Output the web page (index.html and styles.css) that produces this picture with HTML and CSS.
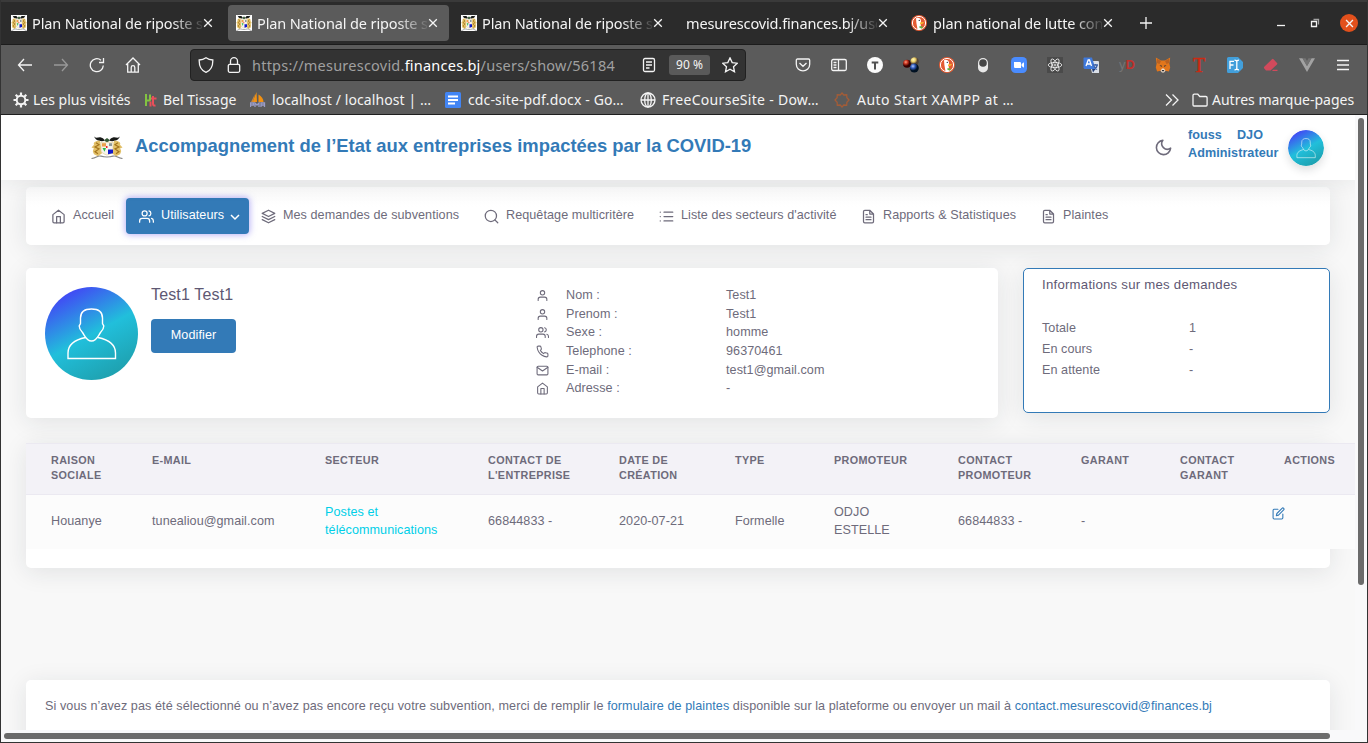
FILE: index.html
```html
<!DOCTYPE html>
<html lang="fr">
<head>
<meta charset="utf-8">
<title>Plan National de riposte</title>
<link rel="stylesheet" href="styles.css">
</head>
<body>
<svg class="sprite" width="0" height="0">
  <defs>
    <linearGradient id="av" x1="0.2" y1="0" x2="0.75" y2="1"><stop offset="0.02" stop-color="#443ef7"/><stop offset=".52" stop-color="#21bfdb"/><stop offset="1" stop-color="#1e9eab"/></linearGradient>
    <radialGradient id="red" cx=".35" cy=".3"><stop offset="0" stop-color="#ff9d80"/><stop offset=".5" stop-color="#c4301c"/><stop offset="1" stop-color="#300"/></radialGradient>
    <radialGradient id="yel" cx=".35" cy=".3"><stop offset="0" stop-color="#fff8c0"/><stop offset=".5" stop-color="#ecd06a"/><stop offset="1" stop-color="#543"/></radialGradient>
    <radialGradient id="blu" cx=".35" cy=".3"><stop offset="0" stop-color="#b0ccff"/><stop offset=".5" stop-color="#2d55b5"/><stop offset="1" stop-color="#012"/></radialGradient>
  </defs>
  <symbol id="home" viewBox="0 0 24 24"><path d="M3 9l9-7 9 7v11a2 2 0 0 1-2 2H5a2 2 0 0 1-2-2z"/><path d="M9 22V12h6v10"/></symbol>
  <symbol id="user" viewBox="0 0 24 24"><path d="M20 21v-2a4 4 0 0 0-4-4H8a4 4 0 0 0-4 4v2"/><circle cx="12" cy="7" r="4"/></symbol>
  <symbol id="users" viewBox="0 0 24 24"><path d="M17 21v-2a4 4 0 0 0-4-4H5a4 4 0 0 0-4 4v2"/><circle cx="9" cy="7" r="4"/><path d="M23 21v-2a4 4 0 0 0-3-3.870M16 3.130a4 4 0 0 1 0 7.750"/></symbol>
  <symbol id="layers" viewBox="0 0 24 24"><path d="M12 2L2 7l10 5 10-5zM2 17l10 5 10-5M2 12l10 5 10-5"/></symbol>
  <symbol id="search" viewBox="0 0 24 24"><circle cx="11" cy="11" r="9"/><path d="M22 22l-4.600-4.600"/></symbol>
  <symbol id="list" viewBox="0 0 24 24"><path d="M8 5h14M8 12h14M8 19h14M2 5h.1M2 12h.1M2 19h.1"/></symbol>
  <symbol id="file" viewBox="0 0 24 24"><path d="M14 2H6a2 2 0 0 0-2 2v16a2 2 0 0 0 2 2h12a2 2 0 0 0 2-2V8zM14 2v6h6M16 13H8M16 17H8M10 9H8"/></symbol>
  <symbol id="phone" viewBox="0 0 24 24"><path d="M22 16.920v3a2 2 0 0 1-2.180 2 19.800 19.800 0 0 1-8.630-3.070 19.500 19.500 0 0 1-6-6A19.800 19.800 0 0 1 2.120 4.180 2 2 0 0 1 4.110 2h3a2 2 0 0 1 2 1.720c.13.96.36 1.900.7 2.810a2 2 0 0 1-.45 2.110L8.090 9.910a16 16 0 0 0 6 6l1.270-1.270a2 2 0 0 1 2.110-.45c.91.34 1.850.57 2.810.7A2 2 0 0 1 22 16.920z"/></symbol>
  <symbol id="mail" viewBox="0 0 24 24"><rect x="2" y="4" width="20" height="16" rx="2"/><path d="M22 6l-10 7L2 6"/></symbol>
  <symbol id="moon" viewBox="0 0 24 24"><path d="M21 12.790A9 9 0 1 1 11.210 3 7 7 0 0 0 21 12.790z"/></symbol>
  <symbol id="edit" viewBox="0 0 24 24"><path d="M11 4H4a2 2 0 0 0-2 2v14a2 2 0 0 0 2 2h14a2 2 0 0 0 2-2v-7"/><path d="M18.500 2.500a2.120 2.120 0 0 1 3 3L12 15l-4 1 1-4z"/></symbol>
  <symbol id="close" viewBox="0 0 10 10"><path d="M1.200 1.200l7.600 7.600M8.800 1.200l-7.600 7.600"/></symbol>
  <symbol id="crest" viewBox="0 0 32 24" preserveAspectRatio="none">
    <path d="M3 0c1 3 4 1 7 1.500 2 .5 3.500 2 3.500 3.500C10 6 4 5 3 0zM29 0c-1 3-4 1-7 1.500-2 .5-3.500 2-3.500 3.500C22 6 28 5 29 0z" fill="#181a18"/>
    <path d="M13 4.500l3-2.500 3 2.500-3 2.500z" fill="#355a36"/>
    <path d="M9 5C4 5 2 7 3 9l-2.500 3L3 13c-2 2-1 4 0 6l4 2 4-3zM23 5c5 0 7 2 6 4l2.500 3-2.500 1c2 2 1 4 0 6l-4 2-4-3z" fill="#e2c068"/>
    <path d="M5 7l3 2-4 2.500 4 2-4 3 3 2M27 7l-3 2 4 2.500-4 2 4 3-3 2" fill="none" stroke="#a3741d" stroke-width="1.200"/>
    <path d="M10 6.500h12V15c0 3-4 4-6 5-2-1-6-2-6-5z" fill="#f6f4ee" stroke="#e0c681" stroke-width=".6"/>
    <path d="M11 7.500h4v3.500h-4z" fill="#eda04a"/><path d="M18 7.500h3v3h-3z" fill="#8f9a9a"/><path d="M11.500 12.500h3.500l-1.500 4z" fill="#29b94c"/><path d="M17 14h5v4l-5 1z" fill="#1119c9"/><path d="M15 10.500h1.500v2H15z" fill="#e22"/>
    <path d="M.5 23.500C5 23 7 20 10 21c3 1 9 1 12 0 3-1 5 2 9.500 2.500" fill="none" stroke="#888" stroke-width="1.200"/>
  </symbol>
  <symbol id="duck" viewBox="0 0 16 16"><circle cx="8" cy="8" r="8" fill="#e45b33"/><circle cx="8" cy="8" r="6.600" fill="#e45b33" stroke="#fff" stroke-width="1"/><path d="M5 3.300c2-1.300 5 0 5 2.700l-.3 4 .8 4c-1.500.7-3 .6-4 .3L5.400 8z" fill="#fff"/><path d="M9 7.500l4-.6-1 1.700-3 .7z" fill="#f7c231"/><path d="M8.500 11l3 .5v2l-3-.6z" fill="#5db544"/><circle cx="8.300" cy="5.400" r=".7" fill="#345"/></symbol>
  <symbol id="portrait" viewBox="0 0 93 93"><circle cx="46.500" cy="46.500" r="46.500" fill="url(#av)"/><path d="M40.500 50.500C31 52.500 23 57 23 66v5.500h47.500V66c0-9-8-13.500-17.500-15.500M35.500 31c0-6 4.500-9 11-9s11 3 11 9v5.500l1.300 2.500c0 3-1.300 4.500-3.300 6.500-2.500 3.500-4 8.500-9 8.500s-6.500-5-9-8.500c-2-2-3.300-3.500-3.300-6.500l1.300-2.500z" fill="none" stroke="#fff" stroke-width="1.400"/></symbol>
</svg>

<header class="browser">
  <div class="tabs">
    <div class="tab"><svg class="fav"><use href="#crest"/></svg><span class="tab-title">Plan National de riposte s</span><svg class="x"><use href="#close"/></svg></div>
    <div class="tab active"><svg class="fav"><use href="#crest"/></svg><span class="tab-title">Plan National de riposte s</span><svg class="x"><use href="#close"/></svg></div>
    <div class="tab"><svg class="fav"><use href="#crest"/></svg><span class="tab-title">Plan National de riposte s</span><svg class="x"><use href="#close"/></svg></div>
    <div class="tab"><span class="tab-title">mesurescovid.finances.bj/use</span><svg class="x"><use href="#close"/></svg></div>
    <div class="tab"><svg class="fav plain"><use href="#duck"/></svg><span class="tab-title">plan national de lutte con</span><svg class="x"><use href="#close"/></svg></div>
    <svg class="plus" viewBox="0 0 12 12"><path d="M6 0v12M0 6h12"/></svg>
    <svg class="win min" viewBox="0 0 16 16"><path d="M4 10.500h8"/></svg>
    <svg class="win" viewBox="0 0 16 16"><path d="M4.500 6.500h5v5h-5z"/><path class="back" d="M6.500 4.500h5v5"/></svg>
    <span class="win-close"><svg viewBox="0 0 10 10"><use href="#close"/></svg></span>
  </div>

  <div class="toolbar">
    <div class="nav-buttons">
      <svg viewBox="0 0 16 16"><path d="M15 8H1.500M7 2L1.500 8 7 14"/></svg>
      <svg class="dim" viewBox="0 0 16 16"><path d="M1 8h13.500M9 2l5.500 6L9 14"/></svg>
      <svg viewBox="0 0 16 16"><path d="M14.300 8.500A6.500 6.500 0 1 1 12 3.200M14.500 1v4.500H10"/></svg>
      <svg viewBox="0 0 16 16"><path d="M1 8l7-7 7 7M2.700 7v8.200h10.600V7M6.200 15V10.500a1.800 1.800 0 0 1 3.600 0V15"/></svg>
    </div>
    <div class="url">
      <svg viewBox="0 0 16 16"><path d="M8 .8c2 1.500 4.500 2.200 6.800 2.200C15 9 13 13.500 8 15.400 3 13.500 1 9 1.200 3 3.500 3 6 2.300 8 .8z"/></svg>
      <svg viewBox="0 0 16 16"><rect x="2.300" y="7.300" width="11.400" height="8" rx="1.500"/><path d="M4.500 7V4.200a3.500 3.500 0 0 1 7 0V7"/></svg>
      <span class="address">https://mesurescovid.<b>finances.bj</b>/users/show/56184</span>
      <svg class="reader" viewBox="0 0 16 16"><rect x="2.500" y="1.500" width="11" height="13" rx="1.500"/><path d="M5 5h6M5 8h6M5 11h3.500"/></svg>
      <span class="zoom">90 %</span>
      <svg viewBox="0 0 16 16"><path d="M8 .9l2.200 4.700 5.100.6-3.800 3.500 1 5.100L8 12.300l-4.500 2.500 1-5.100L.7 6.200l5.100-.6z"/></svg>
    </div>
    <div class="extensions">
      <svg viewBox="0 0 16 16"><path d="M2.500 2h11c.8 0 1.200.5 1.200 1.200v4a6.700 6.700 0 0 1-13.400 0v-4C1.300 2.500 1.700 2 2.500 2zM4.500 6L8 9.300 11.500 6"/></svg>
      <svg viewBox="0 0 16 16"><rect x=".7" y="2.500" width="14.600" height="11" rx="1.500"/><path d="M7.500 2.500v11M2.500 5.500h3M2.500 8h3M2.500 10.500h3"/></svg>
      <svg class="fill" viewBox="0 0 16 16"><circle cx="8" cy="8" r="8" fill="#fbfbfb"/><path d="M4.700 4.500h6.600v2H9v6H7v-6H4.700z" fill="#505050"/></svg>
      <svg class="fill" viewBox="0 0 16 16"><circle cx="4" cy="6.700" r="4" fill="url(#red)"/><circle cx="11.600" cy="4.400" r="4.200" fill="url(#yel)"/><circle cx="11.300" cy="11" r="4.500" fill="url(#blu)"/></svg>
      <svg class="fill" viewBox="0 0 16 16"><use href="#duck"/></svg>
      <svg class="fill" viewBox="0 0 16 16"><rect x="3" y="1" width="10" height="14.500" rx="5" fill="#e8e8e8"/><circle cx="8" cy="6" r="3.800" fill="#464646"/></svg>
      <svg class="fill" viewBox="0 0 16 16"><rect width="16" height="16" rx="4.500" fill="#4a8cff"/><path d="M3 5h6a1.200 1.200 0 0 1 1 1v5H4a1.200 1.200 0 0 1-1-1zM10.600 7L13 5.300v5.400L10.600 9z" fill="#fff"/></svg>
      <svg class="react" viewBox="0 0 16 16"><rect width="16" height="16" fill="#4a4a4a" stroke="none"/><ellipse cx="8" cy="8" rx="6.800" ry="2.600"/><ellipse cx="8" cy="8" rx="6.800" ry="2.600" transform="rotate(60 8 8)"/><ellipse cx="8" cy="8" rx="6.800" ry="2.600" transform="rotate(120 8 8)"/><circle cx="8" cy="8" r="1"/></svg>
      <svg class="fill" viewBox="0 0 16 16"><path d="M6 4h9a1 1 0 0 1 1 1v11H9z" fill="#dadfe8"/><path d="M1 .5h8l3.500 11.500H1.500L.5 11V1z" fill="#3f79db"/><path d="M3 9l2.200-6h1.300l2 6M3.800 7h4" fill="none" stroke="#fff" stroke-width="1.300"/><path d="M10 8h5M12.500 7v1M14 8c0 2-2 4-3 4.500M11 9.500l3 3" fill="none" stroke="#3f63a8"/><path d="M9 12h3.500L10 15.500z" fill="#233d75"/></svg>
      <span class="yd">y<b>D</b></span>
      <svg class="fill" viewBox="0 0 16 16"><path d="M.8.5L6 3.500h4L15.200.5l-.8 6 .8 4-1.300 4-3.400-.8L9 15H7l-1.500-1.300-3.400.8-1.300-4 .8-4z" fill="#e2761b"/><path d="M5.500 13.700L7 11.500h2l1.500 2.200L9 15.500H7z" fill="#e9dccd"/><path d="M4.500 8l2.500.7-.5 1.200zM11.500 8L9 8.700l.5 1.200zM7 13h2l.3 1.300H6.700z" fill="#32343c"/><path d="M2 1.800L6 4l-1.500 3L2 6zM14 1.800L10 4l1.500 3L14 6z" fill="#b96121"/></svg>
      <span class="serif-t">T</span>
      <svg class="fill" viewBox="0 0 16 16"><path d="M1.500 0H11l5 5v6l-5 5H1.500A1.500 1.500 0 0 1 0 14.500v-13A1.500 1.500 0 0 1 1.500 0z" fill="#429fdb"/><path d="M3 12V4.300h4M3 8h3.500M7.500 3.200c1.700 0 2.300.5 2.300 1.200v7.200c0 .8-.6 1.200-2.300 1.200M12 3.200c-1.500 0-2.200.5-2.200 1.200M12 12.800c-1.500 0-2.200-.5-2.200-1.200" fill="none" stroke="#fff" stroke-width="1.300"/></svg>
      <svg class="fill" viewBox="0 0 16 16"><path d="M1.500 9.500L9 2.300a1 1 0 0 1 1.500 0L14 6a1 1 0 0 1 0 1.400L7.500 13.500H3L1.300 11.600c-.6-.7-.5-1.500.2-2.100zM10 12.700h4.500v1.300H9z" fill="#d14a5c"/></svg>
      <svg class="fill" viewBox="0 0 16 16"><path d="M0 1.300h3.500L8 9l4.500-7.700H16L8 15z" fill="#a2a2a2"/><path d="M3.500 1.300h3L8 4l1.500-2.700h3L8 9z" fill="#747474"/></svg>
      <svg viewBox="0 0 16 16"><path d="M2 3.500h12M2 8h12M2 12.500h12"/></svg>
    </div>
  </div>

  <div class="bookmarks">
    <div class="bm"><svg viewBox="0 0 16 16"><circle cx="8" cy="8" r="4.300" stroke-width="2"/><path stroke-width="2.200" d="M8 .5v3M8 12.500v3M.5 8h3M12.500 8h3M2.700 2.700l2 2M11.300 11.300l2 2M2.700 13.300l2-2M11.300 4.700l2-2"/></svg><span class="t1">Les plus visités</span></div>
    <div class="bm"><svg class="narrow" viewBox="0 0 13 16"><path d="M2 2v12M2 8.500h4.500M6 2.500v6" stroke="#83c341" stroke-width="2"/><path d="M9 4v8q0 2 2.500 1.500M7 6.500h5.500M6.500 9.500v5" stroke="#e8505b" stroke-width="2"/></svg><span class="t2">Bel Tissage</span></div>
    <div class="bm"><svg viewBox="0 0 16 16"><path d="M6.500 0L7 10H2.500zM8.500 2.500c3 1.500 5 4.500 5 7.500H8.500z" fill="#f29111" stroke="none"/><path d="M5 2L1 10h2z" fill="#c9873c" stroke="none"/><path d="M.5 15v-4h3v2H1M5 15v-4l2 2 2-2v4M11 15v-4h3.500v4M11.500 13h3" stroke="#9a9cc6"/></svg><span class="t3">localhost / localhost | …</span></div>
    <div class="bm"><svg viewBox="0 0 16 16"><rect width="16" height="16" rx="1.500" fill="#4285f4" stroke="none"/><path d="M3 4.500h10M3 8h10M3 11.500h7" stroke="#fff" stroke-width="1.800"/></svg><span class="t4">cdc-site-pdf.docx - Go…</span></div>
    <div class="bm"><svg viewBox="0 0 16 16"><circle cx="8" cy="8" r="7"/><ellipse cx="8" cy="8" rx="3.300" ry="7"/><path d="M1 8h14M8 1v14"/></svg><span class="t5">FreeCourseSite - Dow…</span></div>
    <div class="bm"><svg viewBox="0 0 16 16"><path stroke="#a35c37" stroke-width="1.300" d="M8 1l1.800 2 2.900-.2.200 2.900 2.100 2.300-2.100 2.300-.2 2.900-2.900-.2L8 15l-1.800-2-2.900.2-.2-2.900L1 8l2.100-2.300.2-2.900 2.900.2z"/></svg><span class="t6">Auto Start XAMPP at …</span></div>
    <div class="bm"><svg class="more" viewBox="0 0 16 16"><path d="M2 2.500L7.500 8 2 13.500M8.500 2.500L14 8l-5.500 5.500"/></svg></div>
    <div class="bm other"><svg viewBox="0 0 16 16"><path d="M1 13V3.500A1.300 1.300 0 0 1 2.300 2.200h3.500l2 2.300h6a1.300 1.300 0 0 1 1.300 1.300V13a1 1 0 0 1-1 1H2a1 1 0 0 1-1-1z"/></svg><span class="t7">Autres marque-pages</span></div>
  </div>
</header>

<main class="window">
  <div class="page">
    <div class="topbar">
      <svg class="logo"><use href="#crest"/></svg>
      <h1>Accompagnement de l’Etat aux entreprises impactées par la COVID-19</h1>
      <svg class="ic moon"><use href="#moon"/></svg>
      <div class="who"><span class="names"><span>fouss</span><span>DJO</span></span><span class="role">Administrateur</span></div>
      <svg class="small-avatar"><use href="#portrait"/></svg>
    </div>

    <nav class="card menu">
      <a class="item i1"><svg class="ic"><use href="#home"/></svg>Accueil</a>
      <a class="item current"><svg class="ic"><use href="#users"/></svg>Utilisateurs<svg class="chev" viewBox="0 0 10 10"><path d="M1 3l4 4 4-4"/></svg></a>
      <a class="item i3"><svg class="ic"><use href="#layers"/></svg>Mes demandes de subventions</a>
      <a class="item i4"><svg class="ic"><use href="#search"/></svg>Requêtage multicritère</a>
      <a class="item i5"><svg class="ic"><use href="#list"/></svg>Liste des secteurs d'activité</a>
      <a class="item i6"><svg class="ic"><use href="#file"/></svg>Rapports &amp; Statistiques</a>
      <a class="item i7"><svg class="ic"><use href="#file"/></svg>Plaintes</a>
    </nav>

    <section class="summary">
      <div class="card profile">
        <svg class="avatar"><use href="#portrait"/></svg>
        <div class="identity"><h2>Test1 Test1</h2><button class="edit-btn">Modifier</button></div>
        <dl class="details">
          <svg class="ic"><use href="#user"/></svg><dt>Nom :</dt><dd>Test1</dd>
          <svg class="ic"><use href="#user"/></svg><dt>Prenom :</dt><dd>Test1</dd>
          <svg class="ic"><use href="#users"/></svg><dt>Sexe :</dt><dd>homme</dd>
          <svg class="ic"><use href="#phone"/></svg><dt>Telephone :</dt><dd>96370461</dd>
          <svg class="ic"><use href="#mail"/></svg><dt>E-mail :</dt><dd>test1@gmail.com</dd>
          <svg class="ic"><use href="#home"/></svg><dt>Adresse :</dt><dd>-</dd>
        </dl>
      </div>
      <div class="card info">
        <h3>Informations sur mes demandes</h3>
        <dl><dt>Totale</dt><dd>1</dd><dt>En cours</dt><dd>-</dd><dt>En attente</dt><dd>-</dd></dl>
      </div>
    </section>

    <section class="card listing">
      <table>
        <colgroup><col class="c1"><col class="c2"><col class="c3"><col class="c4"><col class="c5"><col class="c6"><col class="c7"><col class="c8"><col class="c9"><col class="c10"><col class="c11"></colgroup>
        <thead><tr><th>Raison<br>sociale</th><th>E-mail</th><th>Secteur</th><th>Contact de<br>l'entreprise</th><th>Date de<br>création</th><th>Type</th><th>Promoteur</th><th>Contact<br>promoteur</th><th>Garant</th><th>Contact<br>garant</th><th>Actions</th></tr></thead>
        <tbody><tr><td>Houanye</td><td>tunealiou@gmail.com</td><td class="sector">Postes et<br>télécommunications</td><td>66844833 -</td><td>2020-07-21</td><td>Formelle</td><td>ODJO<br>ESTELLE</td><td>66844833 -</td><td>-</td><td></td><td class="actions"><svg class="ic"><use href="#edit"/></svg></td></tr></tbody>
      </table>
    </section>

    <footer class="card notice">Si vous n’avez pas été sélectionné ou n’avez pas encore reçu votre subvention, merci de remplir le <a>formulaire de plaintes</a> disponible sur la plateforme ou envoyer un mail à <a>contact.mesurescovid@finances.bj</a></footer>
  </div>
  <div class="vscroll"><i></i></div>
  <div class="hscroll"><i></i></div>
</main>
</body>
</html>
```
FILE: styles.css
```css
* { box-sizing: border-box; }
body { margin: 0; width: 1368px; height: 743px; overflow: hidden; font-family: "Liberation Sans", Arial, sans-serif; background: #f8f8f8; }
.sprite { position: absolute; }
svg { display: block; flex: none; }

/* Browser frame */
.browser { height: 115px; background: #5b5b5b; color: #f4f4f4; font: 14.5px/20px "Noto Sans", sans-serif; border-bottom: 1px solid #1f1f1f; border-left: 1px solid #333; border-right: 1px solid #333; white-space: nowrap; }
.browser svg { fill: none; stroke: #f4f4f4; stroke-width: 1.300; }
.browser svg.fill, .fav { stroke: none !important; }
.tabs { height: 45px; background: #2b2b2b; border-top: 2px solid #3a3a3a; border-bottom: 1px solid #1c1c1c; display: flex; align-items: center; padding-left: 2px; gap: 4px; }
.tab { width: 221px; height: 36px; border-radius: 4px; display: flex; align-items: center; padding: 0 11px 0 8px; flex: none; }
.tab.active { background: #5b5b5b; }
.fav { width: 16px; height: 16px; margin-right: 5px; background: #fff; }
.fav.plain { background: none; margin-right: 6px; }
.tab-title { flex: 1; min-width: 0; letter-spacing: -.13px; -webkit-mask-image: linear-gradient(90deg, #000 calc(100% - 30px), rgba(0,0,0,.1)); mask-image: linear-gradient(90deg, #000 calc(100% - 30px), rgba(0,0,0,.1)); }
.x { width: 10px; height: 10px; margin-left: 1px; }
.plus { width: 12px; height: 12px; margin-left: 12px; }
.win { width: 16px; height: 16px; margin-left: 14px; }
.win .back { opacity: .6; }
.win.min { margin-left: 117px; }
.win-close { width: 18px; height: 18px; margin-left: 13px; border-radius: 50%; background: #e2501c; display: grid; place-items: center; }
.win-close svg { width: 9px; height: 9px; stroke-width: 1.500; }
.toolbar { height: 40px; display: flex; align-items: center; padding: 0 16px 0 16px; }
.nav-buttons { display: flex; gap: 20px; width: 173px; }
.nav-buttons svg { width: 16px; height: 16px; }
.nav-buttons .dim { opacity: .4; }
.url { width: 556px; height: 32px; background: #333; border: 1px solid #212121; border-radius: 4px; display: flex; align-items: center; padding: 0 7px; }
.url svg { width: 16px; height: 16px; margin-right: 12px; }
.url .reader { margin-right: 12px; margin-left: auto; }
.address { color: #a0a0a0; margin-left: -2px; letter-spacing: .23px; }
.address b { color: #fff; font-weight: 400; }
.zoom { width: 41px; height: 20px; line-height: 20px; background: #5a5a5a; border-radius: 3px; text-align: center; font-size: 12px; margin-right: 12px; }
.url svg:last-child { margin-right: 0; }
.extensions { margin-left: auto; display: flex; gap: 20px; align-items: center; }
.extensions svg, .extensions span { width: 16px; height: 16px; flex: none; }
.browser .react { stroke-width: .8; }
.yd { font: 13px/16px "Liberation Sans", sans-serif; color: #757575; }
.yd b { color: #c2312c; }
.serif-t { font: 20px/16px "Liberation Serif", serif; color: #cc2a12; text-align: center; -webkit-text-stroke: .5px #cc2a12; }
.bookmarks { height: 30px; padding-left: 12px; display: grid; grid-template-columns: 131px 106px 195px 195px 194px 330px 28px 170px; align-items: center; font-size: 14px; }
.bm { display: flex; align-items: center; gap: 4px; }
.bm svg { width: 16px; height: 16px; }
.bm .narrow { width: 13px; margin-right: 2px; }
.t3, .t5 { margin-left: 2px; }
.t4, .t6 { margin-left: 3px; }
.t3 { letter-spacing: .09px; } .t4 { letter-spacing: .14px; } .t5 { letter-spacing: .29px; } .t6 { letter-spacing: .43px; }

/* Page viewport */
.window { height: 628px; border: solid #333; border-width: 0 1px 1px; display: grid; grid-template: 615px 12px / 1354px 12px; }
.page { background: #f8f8f8; overflow: hidden; display: flex; flex-direction: column; color: #6e6b7b; font-size: 12.6px; line-height: 18.300px; letter-spacing: .065px; }
.ic { width: 15px; height: 15px; fill: none; stroke: #6e6b7b; stroke-width: 2; stroke-linecap: round; stroke-linejoin: round; }
h1, h2, h3, dl, dd { margin: 0; font-weight: 400; }
.card { background: #fff; border-radius: 5px; box-shadow: 0 4px 24px rgba(34,41,47,.1); margin: 0 25px; flex: none; }
.topbar { height: 65px; flex: none; background: #fff; display: flex; align-items: center; padding: 0 31px 0 90px; box-shadow: 0 0 24px rgba(34,41,47,.1); position: relative; z-index: 1; clip-path: inset(0 0 -30px 0); }
.logo { width: 32px; height: 23px; margin-right: 12px; }
.topbar h1 { font-size: 18.400px; line-height: 22px; letter-spacing: 0; font-weight: 700; color: #337ab7; margin: 0 auto 4px 0; }
.moon { width: 19px; height: 19px; margin-right: 15px; }
.who { width: 100px; height: 46px; display: flex; flex-direction: column; color: #337ab7; font-weight: 700; padding-top: 1px; }
.names { display: flex; gap: 15px; }
.small-avatar { width: 36px; height: 36px; border-radius: 50%; box-shadow: 0 4px 8px rgba(34,41,47,.15); }
.menu { margin-top: 7px; height: 58px; display: flex; align-items: flex-start; padding: 11px 0 0 25px; background: linear-gradient(#fafafa, #fff 20px); }
.item { height: 36px; display: flex; align-items: center; padding-bottom: 2px; white-space: nowrap; }
.item .ic { margin: 2px 7px 0 0; }
.i1 { width: 75px; }
.current { width: 123px; padding-left: 13px; background: #337ab7; color: #fff; border-radius: 4px; box-shadow: 0 0 6px 1px rgba(115,103,240,.5); margin-right: 12px; }
.current .ic { stroke: #fff; }
.chev { width: 10px; height: 10px; margin: 4px 0 0 6px; fill: none; stroke: #fff; stroke-width: 1.500; }
.i3 { width: 223px; } .i4 { width: 175px; } .i5 { width: 202px; } .i6 { width: 180px; }
.summary { display: flex; margin: 23px 25px 0; justify-content: space-between; align-items: flex-start; flex: none; }
.summary .card { margin: 0; }
.profile { width: 972px; height: 150px; display: flex; padding: 19px; }
.avatar { width: 93px; height: 93px; }
.identity { width: 386px; margin: -2px 0 0 13px; }
h2 { font-size: 16px; line-height: 20px; color: #5e5873; letter-spacing: .15px; }
.edit-btn { display: block; margin-top: 14px; width: 85px; height: 34px; padding: 0 0 2px; border: 0; border-radius: 4px; background: #337ab7; color: #fff; font: 12.6px "Liberation Sans", sans-serif; letter-spacing: .1px; }
.details { display: grid; grid-template-columns: 29px 160px 200px; grid-auto-rows: 18.700px; align-content: start; margin-top: -1px; }
.details .ic { width: 13px; height: 13px; margin-top: 3px; margin-left: -1px; }
.info { width: 307px; height: 145px; border: 1px solid #337ab7; padding: 7px 18px; }
.info h3 { font-size: 13.200px; color: #5e5873; letter-spacing: .24px; }
.info dl { display: grid; grid-template-columns: 147px 1fr; grid-auto-rows: 21px; margin-top: 24px; line-height: 21px; }
.listing { margin-top: 25px; height: 125px; }
table { width: 1329px; border-collapse: separate; border-spacing: 0; table-layout: fixed; }
th, td { padding: 0 0 0 25px; text-align: left; white-space: nowrap; }
th { height: 52px; padding-top: 9px; vertical-align: top; background: #f3f2f7; border: solid #ebe9f1; border-width: 1px 0; font-size: 10.800px; line-height: 15px; text-transform: uppercase; letter-spacing: .35px; }
td { height: 54px; background: #fcfcfc; vertical-align: middle; padding-bottom: 2px; }
.sector { color: #00cfe8; }
.actions .ic { width: 13px; height: 13px; stroke: #337ab7; margin: -14px 0 0 -12px; }
.c1 { width: 101px; } .c2 { width: 173px; } .c3 { width: 163px; } .c4 { width: 131px; } .c5 { width: 116px; } .c6 { width: 99px; }
.c7 { width: 124px; } .c8 { width: 123px; } .c9 { width: 99px; } .c10 { width: 104px; } .c11 { width: 96px; }
.notice { margin-top: 112px; height: 80px; padding: 17px 19px; white-space: nowrap; letter-spacing: .078px; }
.notice a { color: #337ab7; }
.vscroll, .hscroll { background: #f9f9fa; }
.vscroll i { display: block; width: 6px; height: 467px; margin: 3px 0 0 3px; border-radius: 3px; background: #6b6b6b; }
.hscroll { grid-column: 1 / 3; }
.hscroll i { display: block; width: 1326px; height: 6px; margin: 3px 0 0 3px; border-radius: 3px; background: #6b6b6b; }
```
